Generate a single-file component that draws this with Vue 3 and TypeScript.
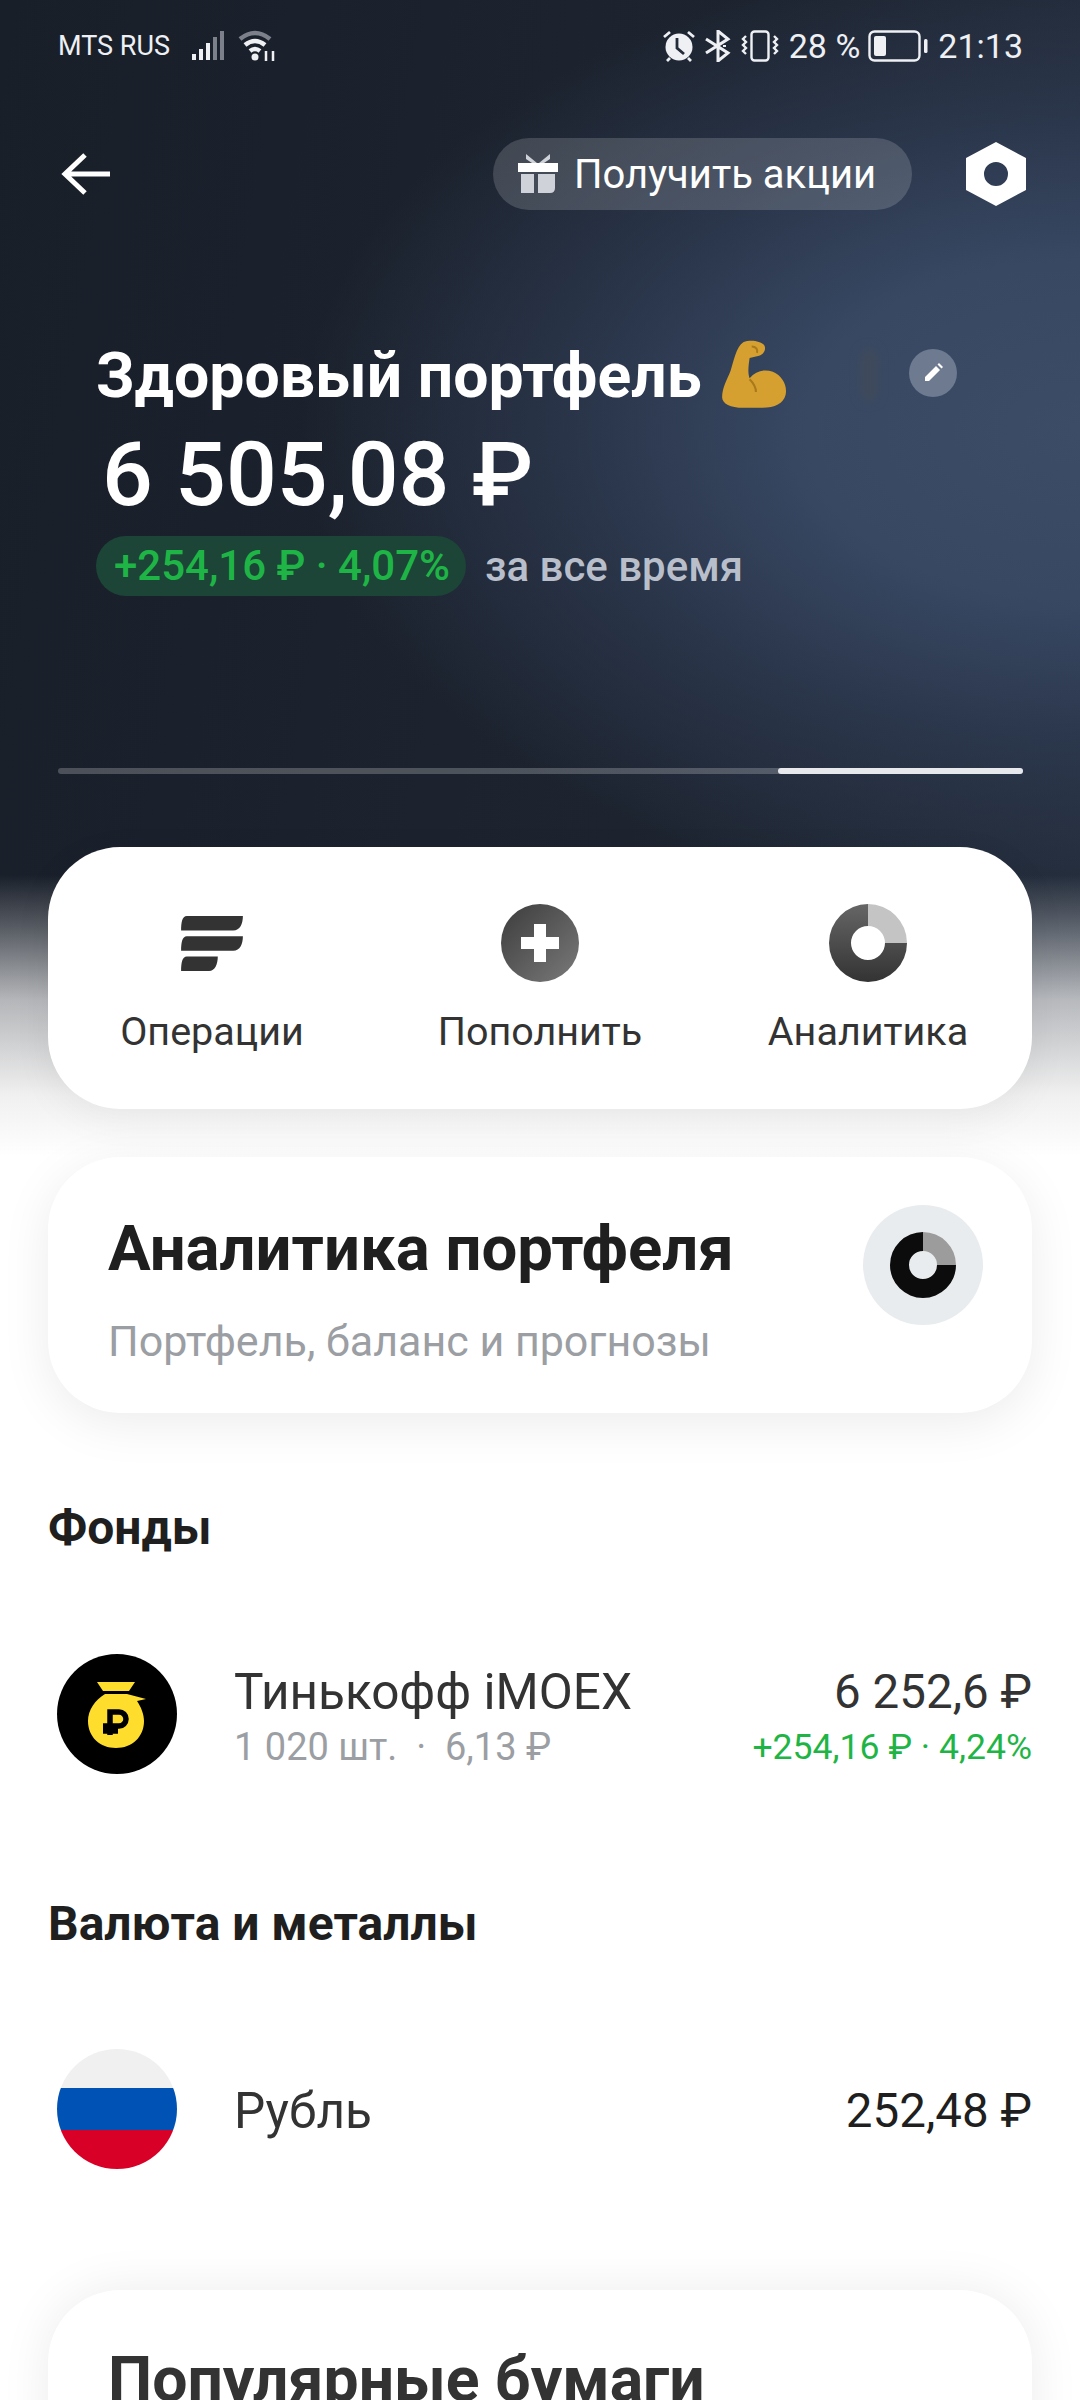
<script setup lang="ts">
interface Action { key: string; label: string }

const actions: Action[] = [
  { key: 'ops', label: 'Операции' },
  { key: 'add', label: 'Пополнить' },
  { key: 'stats', label: 'Аналитика' },
]
</script>

<template>
  <div class="page">
    <section class="hero">
      <div class="status">
        <span class="carrier">MTS RUS</span>
        <svg class="signal" viewBox="0 0 34 32" width="34" height="32">
          <rect x="0" y="24" width="4" height="6" fill="#eef0f4" />
          <rect x="7" y="19" width="4" height="11" fill="#eef0f4" />
          <rect x="14" y="13" width="4" height="17" fill="#eef0f4" />
          <rect x="21" y="7" width="4" height="23" fill="#7b808a" />
          <rect x="28" y="1" width="4" height="29" fill="#7b808a" />
        </svg>
        <svg class="wifi" viewBox="0 0 38 32" width="38" height="32" fill="none">
          <path d="M2 9 Q17 -3 32 9" stroke="#7b808a" stroke-width="4.500" />
          <path d="M7 15 Q17 7 27 15" stroke="#eef0f4" stroke-width="4.500" />
          <path d="M12 21 Q17 17 22 21" stroke="#eef0f4" stroke-width="4.500" />
          <circle cx="17" cy="27" r="3.500" fill="#eef0f4" />
          <path d="M28 21v10M35 21v10" stroke="#eef0f4" stroke-width="2.500" />
        </svg>
        <span class="spacer"></span>
        <svg class="st-icon" viewBox="0 0 32 32" width="32" height="32">
          <circle cx="16" cy="17" r="13.500" fill="#eef0f4" />
          <path d="M14 8v10l7 6" stroke="#242c3a" stroke-width="2.800" fill="none" />
          <path d="M1 7l6-5M31 7l-6-5M4 31l3-3M28 31l-3-3" stroke="#eef0f4" stroke-width="2.800" />
        </svg>
        <svg class="st-icon" viewBox="0 0 26 32" width="26" height="32" fill="none" stroke="#eef0f4" stroke-width="3">
          <path d="M1 9l22 14-10 8V1l10 8L1 23" />
          <path d="M18 16h3" stroke-width="2" />
        </svg>
        <svg class="st-icon" viewBox="0 0 38 32" width="38" height="32" fill="none" stroke="#eef0f4" stroke-width="2.400">
          <rect x="10.500" y="1.500" width="17" height="29" rx="3" />
          <path d="M5 6l-3 3 3 3-3 3 3 3-3 3 3 3M33 6l3 3-3 3 3 3-3 3 3 3-3 3" />
        </svg>
        <span class="pct">28 %</span>
        <svg class="battery" viewBox="0 0 60 32" width="60" height="32">
          <rect x="1.500" y="1.500" width="50" height="29" rx="5" fill="none" stroke="#eef0f4" stroke-width="2.400" />
          <rect x="6" y="6" width="12" height="20" rx="2" fill="#eef0f4" />
          <rect x="56" y="9" width="3.500" height="14" rx="1.500" fill="#eef0f4" />
        </svg>
        <span class="time">21:13</span>
      </div>

      <div class="nav">
        <svg class="back" viewBox="0 0 50 44" width="50" height="44" fill="none" stroke="#fff" stroke-width="5">
          <path d="M25 3L5 22l20 19M5 22h45" />
        </svg>
        <div class="gift-pill">
          <svg viewBox="0 0 42 42" width="42" height="42">
            <path d="M9 1l11 9h-5L9 6zM33 1L22 10h5l6-4z" fill="#cfd2d8" />
            <rect x="1" y="10" width="40" height="9" fill="#fff" />
            <path d="M4 21h13v19H4zM21 21h17v14q0 5-5 5H21z" fill="#cfd2d8" />
          </svg>
          <span>Получить акции</span>
        </div>
        <svg class="hex" viewBox="0 0 60 64" width="60" height="64">
          <path fill="#fff" fill-rule="evenodd" d="M30 0l30 16v32L30 64 0 48V16zM30 20a12 12 0 1 0 0 24 12 12 0 0 0 0-24z" />
        </svg>
      </div>

      <div class="summary">
        <div class="name-row">
          <span class="name">Здоровый портфель</span>
          <svg class="muscle" viewBox="0 0 70 66" width="74" height="70">
            <path fill="#d5a02f" d="M22 2c7-3 17-1 20 3 2 4-1 9-6 10l-8 2c-1 7-2 14 0 19 6-7 14-9 22-6 9 4 14 13 12 22-2 8-10 12-22 12H22C10 64 2 60 2 54c0-9 5-17 8-25 3-9 5-22 12-27z" />
            <path fill="none" stroke="#a97a1c" stroke-width="2" d="M30 6c4 0 6 3 5 6M28 37c4 4 6 8 6 12" />
          </svg>
          <span class="blur-mark"></span>
          <span class="edit">
            <svg viewBox="0 0 24 24" width="24" height="24">
              <path fill="#fff" d="M4 16L15 5l4 4L8 20H4zM16.500 3.500l1.500-1.500 4 4-1.500 1.500z" />
            </svg>
          </span>
        </div>
        <div class="amount">6 505,08 ₽</div>
        <div class="gain-row">
          <span class="gain">+254,16 ₽ · 4,07%</span>
          <span class="period">за все время</span>
        </div>
      </div>

      <div class="progress"><div class="progress-fill"></div></div>

      <div class="actions">
        <div v-for="a in actions" :key="a.key" class="action">
          <div class="action-icon">
            <svg v-if="a.key === 'ops'" viewBox="0 0 64 58" width="62" height="56">
              <path fill="#333" d="M6 1h58c0 8-3 15-10 15H0C0 8 1 1 6 1zM6 22h58c0 8-3 15-10 15H0c0-8 1-15 6-15zM6 43h32c0 8-3 15-9 15H0c0-8 1-15 6-15z" />
            </svg>
            <svg v-else-if="a.key === 'add'" viewBox="0 0 78 78" width="78" height="78">
              <defs>
                <linearGradient id="addGrad" x1="0" y1="0" x2="1" y2="1">
                  <stop offset="0" stop-color="#3c3c3c" />
                  <stop offset="1" stop-color="#7a7a7a" />
                </linearGradient>
              </defs>
              <circle cx="39" cy="39" r="39" fill="url(#addGrad)" />
              <path fill="#fff" d="M33 20h12v13h13v12H45v13H33V45H20V33h13z" />
            </svg>
            <svg v-else viewBox="0 0 78 78" width="78" height="78">
              <defs>
                <linearGradient id="ringGrad" x1="0" y1="0" x2="0" y2="1">
                  <stop offset="0" stop-color="#666" />
                  <stop offset="1" stop-color="#333" />
                </linearGradient>
              </defs>
              <path fill="url(#ringGrad)" fill-rule="evenodd" d="M39 0a39 39 0 1 0 39 39H56a17 17 0 1 1-17-17z" />
              <path fill="#c4c4c4" d="M39 0a39 39 0 0 1 39 39H56a17 17 0 0 0-17-17z" />
            </svg>
          </div>
          <span class="action-label">{{ a.label }}</span>
        </div>
      </div>
    </section>

    <section class="analytics">
      <div class="analytics-text">
        <div class="analytics-title">Аналитика портфеля</div>
        <div class="analytics-sub">Портфель, баланс и прогнозы</div>
      </div>
      <div class="analytics-icon">
        <svg viewBox="0 0 66 66" width="66" height="66">
          <path fill="#0c0c0c" fill-rule="evenodd" d="M33 0a33 33 0 1 0 33 33H47a14 14 0 1 1-14-14z" />
          <path fill="#9c9c9c" d="M33 0a33 33 0 0 1 33 33H47a14 14 0 0 0-14-14z" />
        </svg>
      </div>
    </section>

    <h2 class="group first">Фонды</h2>
    <div class="row fund">
      <svg class="logo" viewBox="0 0 120 120" width="120" height="120">
        <circle cx="60" cy="60" r="60" fill="#000" />
        <path fill="#ffdd2d" d="M40 28h38l-6 9H46zM48 40h22l19 5-9 2c4 6 7 13 7 20 0 16-12 27-28 27S31 83 31 67c0-11 7-21 17-27z" />
        <path fill="none" stroke="#000" stroke-width="5.500" d="M53 81V58h9a7 7 0 0 1 0 14H46M46 77h15" />
      </svg>
      <div class="row-main">
        <div class="row-name">Тинькофф iMOEX</div>
        <div class="row-sub">1 020 шт.&nbsp; ·&nbsp; 6,13 ₽</div>
      </div>
      <div class="row-right">
        <div class="row-value">6 252,6 ₽</div>
        <div class="row-gain">+254,16 ₽ · 4,24%</div>
      </div>
    </div>

    <h2 class="group second">Валюта и металлы</h2>
    <div class="row currency">
      <div class="flag"></div>
      <div class="row-main">
        <div class="row-name">Рубль</div>
      </div>
      <div class="row-right">
        <div class="row-value dark">252,48 ₽</div>
      </div>
    </div>

    <section class="popular">
      <div class="popular-title">Популярные бумаги</div>
    </section>
  </div>
</template>

<style scoped>
.page {
  width: 1080px;
  height: 2400px;
  overflow: hidden;
  background: #fff;
  font-family: Roboto, "Noto Sans", sans-serif;
  color: #333;
}
.hero {
  padding-bottom: 48px;
  background:
    linear-gradient(to bottom, rgba(240, 240, 240, 0) 875px, rgba(240, 240, 240, 0.3) 930px, rgba(240, 240, 240, 0.72) 1000px, #f0f0f0 1095px, #fff 1157px),
    radial-gradient(ellipse 780px 480px at 100% 430px, #3c4c67 0%, #384863 35%, rgba(47, 60, 84, 0.7) 65%, rgba(35, 44, 60, 0) 100%),
    linear-gradient(100deg, #191f29 0%, #1d2430 60%, #232c3a 100%);
}
.status {
  height: 92px;
  padding: 0 57px 0 58px;
  display: flex;
  align-items: center;
  color: #eef0f4;
  font-size: 29px;
}
.carrier { font-size: 27px; margin-right: 22px; }
.wifi { margin-left: 12px; }
.spacer { flex: 1; }
.st-icon { margin-right: 10px; }
.pct { margin-right: 8px; font-size: 34px; }
.time { font-size: 34px; margin-left: 10px; }

.nav {
  height: 72px;
  margin-top: 46px;
  padding: 0 54px 0 60px;
  display: flex;
  align-items: center;
}
.hex { margin-left: 54px; }
.gift-pill {
  margin-left: auto;
  width: 419px;
  height: 72px;
  box-sizing: border-box;
  padding-left: 24px;
  display: flex;
  align-items: center;
  gap: 15px;
  border-radius: 36px;
  background: rgba(255, 255, 255, 0.16);
  color: #fff;
  font-size: 40px;
  white-space: nowrap;
}

.summary { padding: 125px 0 0 96px; }
.name-row { display: flex; align-items: center; height: 80px; }
.name { font-size: 62.5px; font-weight: 700; color: #fff; white-space: nowrap; }
.muscle { margin-left: 18px; }
.blur-mark {
  width: 18px;
  height: 54px;
  margin-left: 66px;
  border-radius: 9px;
  background: #3f4a5b;
  filter: blur(5px);
}
.edit {
  width: 48px;
  height: 48px;
  margin-left: 31px;
  margin-bottom: 4px;
  border-radius: 50%;
  background: #6d7a8f;
  display: flex;
  align-items: center;
  justify-content: center;
}
.amount {
  margin: 10px 0 0 6px;
  font-size: 89.5px;
  line-height: 100px;
  font-weight: 500;
  color: #fff;
  white-space: nowrap;
}
.gain-row { display: flex; align-items: center; gap: 19px; margin-top: 11px; }
.gain {
  height: 60px;
  width: 370px;
  box-sizing: border-box;
  padding-left: 18px;
  border-radius: 30px;
  background: #1c4537;
  color: #1fb546;
  font-size: 42px;
  font-weight: 500;
  line-height: 60px;
  white-space: nowrap;
}
.period { color: #b9bfca; font-size: 42px; font-weight: 500; }

.progress {
  height: 6px;
  margin: 172px 57px 0 58px;
  border-radius: 3px;
  background: rgba(255, 255, 255, 0.22);
  display: flex;
  justify-content: flex-end;
}
.progress-fill { width: 245px; border-radius: 3px; background: #e6e8ec; }

.actions {
  margin: 73px 48px 0;
  height: 262px;
  border-radius: 72px;
  background: #fff;
  box-shadow: 0 10px 40px rgba(0, 0, 0, 0.05);
  display: grid;
  grid-template-columns: repeat(3, 1fr);
}
.action {
  display: flex;
  flex-direction: column;
  align-items: center;
  padding-top: 57px;
}
.action-icon { height: 78px; display: flex; align-items: center; }
.action-label { margin-top: 27px; font-size: 39.5px; line-height: 46px; color: #333; white-space: nowrap; }

.analytics {
  margin: 0 48px;
  height: 256px;
  box-sizing: border-box;
  padding: 48px 49px 0 60px;
  border-radius: 72px;
  background: #fff;
  box-shadow: 0 10px 50px rgba(0, 0, 0, 0.08);
  display: flex;
  justify-content: space-between;
}
.analytics-text { padding-top: 9px; }
.analytics-title { font-size: 63.5px; line-height: 70px; font-weight: 700; color: #1f1f1f; white-space: nowrap; }
.analytics-sub { margin-top: 33px; font-size: 43px; line-height: 48px; color: #9b9ea3; white-space: nowrap; }
.analytics-icon {
  width: 120px;
  height: 120px;
  border-radius: 50%;
  background: #e9ecee;
  display: flex;
  align-items: center;
  justify-content: center;
}

.group {
  margin: 0 48px;
  font-size: 48px;
  line-height: 52px;
  font-weight: 700;
  color: #1f1f1f;
}
.group.first { margin-top: 89px; }
.group.second { margin-top: 124px; }
.row {
  margin: 0 48px 0 57px;
  height: 120px;
  display: flex;
  align-items: center;
}
.row.fund { margin-top: 100px; }
.row.currency { margin-top: 99px; }
.row-main { flex: 1; margin-left: 57px; padding-top: 4px; }
.row-name { font-size: 49.5px; line-height: 56px; color: #333; white-space: nowrap; }
.row-sub { margin-top: 5px; font-size: 38px; line-height: 44px; color: #9b9ea3; white-space: nowrap; }
.row-right { text-align: right; padding-top: 4px; }
.row-value { font-size: 47.5px; line-height: 56px; color: #333; white-space: nowrap; }
.row-value.dark { color: #1f1f1f; }
.row-gain { margin-top: 5px; font-size: 35.6px; line-height: 44px; color: #1fb546; white-space: nowrap; }
.flag {
  width: 120px;
  height: 120px;
  border-radius: 50%;
  background: linear-gradient(to bottom, #f0f0f0 0 39px, #0052b4 39px 81px, #d80027 81px);
}

.popular {
  margin: 121px 48px 0;
  height: 260px;
  box-sizing: border-box;
  padding: 55px 0 0 60px;
  border-radius: 72px;
  background: #fff;
  box-shadow: 0 0 50px rgba(0, 0, 0, 0.08);
}
.popular-title { font-size: 62.5px; line-height: 70px; font-weight: 700; color: #333; white-space: nowrap; }
</style>
